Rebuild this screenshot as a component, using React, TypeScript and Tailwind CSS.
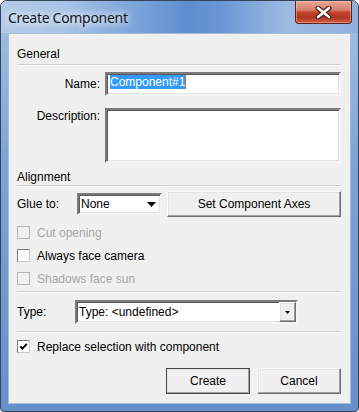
import * as React from "react";

const sunken =
  "border-2 border-t-[#7b7b7b] border-l-[#7b7b7b] border-b-[#f4f4f4] border-r-[#f4f4f4] shadow-[inset_1px_1px_0_#5a5a5a,inset_-1px_-1px_0_#e3e3e3] bg-white";

const raised =
  "border border-t-white border-l-white border-b-[#6e6e6e] border-r-[#6e6e6e] shadow-[inset_-1px_-1px_0_#a0a0a0,inset_1px_1px_0_#e3e3e3] bg-[#f0f0f0]";

function Separator() {
  return <div className="h-[2px] border-t border-t-[#d0d0d0] border-b border-b-white" />;
}

function Check({ label, checked, disabled }: { label: string; checked?: boolean; disabled?: boolean }) {
  return (
    <div className="flex h-[23px] items-center gap-[7px]">
      <span
        className={`flex h-[13px] w-[13px] items-center justify-center border ${
          disabled
            ? "border-[#b4b4b4] bg-[#f0f0f0]"
            : "border-t-[#7a7a7a] border-l-[#7a7a7a] border-b-[#c8c8c8] border-r-[#c8c8c8] bg-white"
        }`}
      >
        {checked && (
          <svg width="9" height="9" viewBox="0 0 9 9">
            <path d="M1.2 4.4 L3.4 6.7 L7.8 1.8" fill="none" stroke="#000" strokeWidth="1.9" />
          </svg>
        )}
      </span>
      <span className={disabled ? "text-[#a6a6a6]" : "text-black"}>{label}</span>
    </div>
  );
}

export default function App() {
  return (
    <div className="flex h-[412px] w-[359px] flex-col overflow-hidden rounded-t-[7px] rounded-b-[4px] border border-[#34445a] bg-[linear-gradient(180deg,#a6c1e4_0%,#7ca3d7_40%,#6690cc_100%)] font-['Liberation_Sans',Arial,sans-serif] text-[12px] leading-[16px] text-black">
      {/* title bar */}
      <div className="relative flex h-[32px] shrink-0 items-start bg-[linear-gradient(90deg,#b5cbe8_0%,#a9c3e6_18%,#7ba3d8_38%,#5e8ed0_52%,#6a97d3_62%,#9dbbe3_80%,#8fb1de_100%)] pl-[7px]">
        <span className="mt-[7px] font-['Noto_Sans',sans-serif] text-[14px] leading-[19px] tracking-[-0.3px] text-[#101820] [text-shadow:0_0_6px_#e8f0fa,0_0_10px_#ffffff]">
          Create Component
        </span>
        <div className="absolute right-[6px] top-0 flex h-[23px] w-[57px] items-center justify-center rounded-b-[4px] border border-t-0 border-[#5a2219] bg-[linear-gradient(180deg,#e8a898_0%,#d8806c_40%,#c2442f_52%,#b43623_75%,#cf5e44_100%)] shadow-[inset_0_0_0_1px_rgba(255,200,190,0.45)]">
          <svg width="17" height="13" viewBox="0 0 17 13">
            <path d="M3 2 L14 11 M14 2 L3 11" stroke="#4b2620" strokeWidth="5" strokeLinecap="round" />
            <path d="M3 2 L14 11 M14 2 L3 11" stroke="#ffffff" strokeWidth="2.6" strokeLinecap="round" />
          </svg>
        </div>
      </div>

      {/* client area */}
      <div className="mx-[7px] mb-[7px] flex flex-1 flex-col border border-[#a9bcd6] bg-[#f0f0f0] pl-[8px] pr-[9px]">
        <div className="flex h-[28px] items-end">General</div>
        <div className="mt-[2px]">
          <Separator />
        </div>

        <div className="mt-[6px] flex h-[24px]">
          <div className="w-[88px] pr-[5px] text-right leading-[24px]">Name:</div>
          <div className={`flex flex-1 items-start pl-[3px] pt-[1px] ${sunken}`}>
            <span className="bg-[#3399ff] leading-[14px] text-white">Component#1</span>
            <span className="h-[14px] w-px bg-[#c8782f]" />
          </div>
        </div>

        <div className="mt-[12px] flex h-[55px]">
          <div className="w-[88px] pr-[5px] text-right">Description:</div>
          <div className={`flex-1 ${sunken}`} />
        </div>

        <div className="flex h-[22px] items-end">Alignment</div>
        <Separator />

        <div className="mt-[4px] flex h-[26px] items-center">
          <div className="w-[60px]">Glue to:</div>
          <div className={`flex h-[22px] w-[85px] items-center ${sunken}`}>
            <span className="flex-1 pl-[2px]">None</span>
            <span className="flex h-full w-[17px] items-center justify-center">
              <svg width="9" height="5" viewBox="0 0 9 5">
                <path d="M0 0 H9 L4.5 5 Z" fill="#000" />
              </svg>
            </span>
          </div>
          <button className={`ml-[5px] flex h-[26px] flex-1 items-center justify-center ${raised}`}>
            Set Component Axes
          </button>
        </div>

        <div className="mt-[4px] flex flex-col">
          <Check label="Cut opening" disabled />
          <Check label="Always face camera" />
          <Check label="Shadows face sun" disabled />
        </div>

        <div className="mt-[1px]">
          <Separator />
        </div>

        <div className="mt-[7px] flex h-[24px] items-center">
          <div className="w-[58px]">Type:</div>
          <div className={`flex h-[24px] w-[223px] items-center ${sunken}`}>
            <span className="flex-1 pl-[2px]">Type: &lt;undefined&gt;</span>
            <span className={`flex h-full w-[17px] items-center justify-center ${raised}`}>
              <svg width="5" height="3" viewBox="0 0 5 3">
                <path d="M0 0 H5 L2.5 3 Z" fill="#000" />
              </svg>
            </span>
          </div>
        </div>

        <div className="mt-[7px]">
          <Separator />
        </div>

        <div className="mt-[2px]">
          <Check label="Replace selection with component" checked />
        </div>

        <div className="mt-[10px] flex justify-end gap-[7px]">
          <button className={`h-[26px] w-[84px] outline outline-1 outline-[#4a4a4a] -outline-offset-1 ${raised}`}>
            Create
          </button>
          <button className={`h-[26px] w-[84px] ${raised}`}>Cancel</button>
        </div>
      </div>
    </div>
  );
}
